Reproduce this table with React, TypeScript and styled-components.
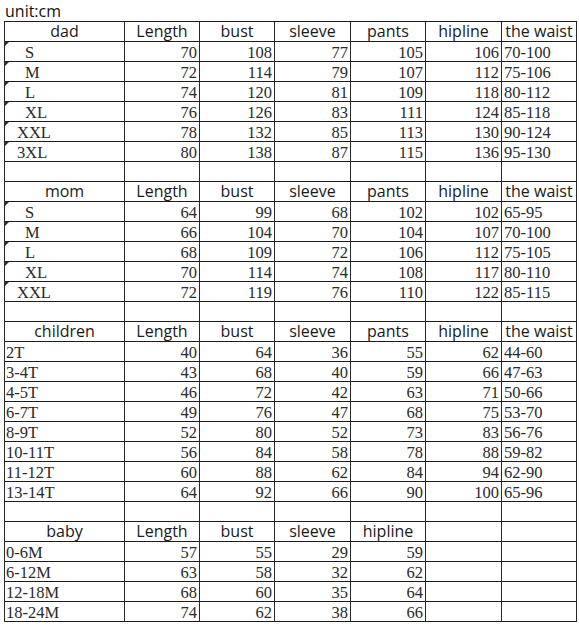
import styled, { createGlobalStyle } from "styled-components";

const GlobalStyle = createGlobalStyle`
  html, body {
    margin: 0;
    padding: 0;
    background: #fff;
  }
`;

const Page = styled.div`
  padding: 0 0 0 4px;
  width: 579px;
  box-sizing: border-box;
`;

const Unit = styled.div`
  height: 21px;
  box-sizing: border-box;
  padding: 1px 0 0 1px;
  font-family: "Open Sans", "Liberation Sans", sans-serif;
  font-size: 16px;
  line-height: 20px;
  color: #111;
`;

const Sheet = styled.div`
  display: grid;
  grid-template-columns: 120px 75px 75px 76px 75px 76px 75px;
  grid-auto-rows: 20px;
  width: 573px;
  border-top: 1px solid #1c1c1c;
  border-left: 1px solid #2a2a2a;
  box-sizing: border-box;
`;

type Kind = "head" | "num" | "label" | "range";

const Cell = styled.div<{ $kind: Kind; $indent?: number; $mark?: boolean }>`
  position: relative;
  box-sizing: border-box;
  border-right: 1px solid #2a2a2a;
  border-bottom: 1px solid #1c1c1c;
  white-space: nowrap;
  color: #1a1a1a;
  display: flex;
  ${(p) =>
    p.$kind === "head"
      ? `
    font-family: "Open Sans", "Liberation Sans", sans-serif;
    font-size: 16px;
    align-items: center;
    justify-content: center;
    line-height: 18px;
    padding-bottom: 1px;
  `
      : `
    font-family: "Liberation Serif", "DejaVu Serif", serif;
    font-size: 16.5px;
    align-items: flex-end;
    line-height: 17px;
    color: #2a2a2a;
  `}
  ${(p) => (p.$kind === "num" ? "justify-content: flex-end; padding-right: 2px;" : "")}
  ${(p) =>
    p.$kind === "label" || p.$kind === "range"
      ? `justify-content: flex-start; padding-left: ${p.$indent ?? 1}px;`
      : ""}

  ${(p) =>
    p.$mark
      ? `
    &::before {
      content: "";
      position: absolute;
      left: 0;
      top: 0;
      border-top: 4px solid #333;
      border-right: 4px solid transparent;
    }
  `
      : ""}
`;

type Row = (string | number)[];

type Section = {
  head: string[];
  rows: Row[];
  marked?: boolean;
  blankAfter?: boolean;
};

const columns = ["Length", "bust", "sleeve", "pants", "hipline", "the waist"];

const sections: Section[] = [
  {
    head: ["dad", ...columns],
    marked: true,
    blankAfter: true,
    rows: [
      ["S", 70, 108, 77, 105, 106, "70-100"],
      ["M", 72, 114, 79, 107, 112, "75-106"],
      ["L", 74, 120, 81, 109, 118, "80-112"],
      ["XL", 76, 126, 83, 111, 124, "85-118"],
      ["XXL", 78, 132, 85, 113, 130, "90-124"],
      ["3XL", 80, 138, 87, 115, 136, "95-130"],
    ],
  },
  {
    head: ["mom", ...columns],
    marked: true,
    blankAfter: true,
    rows: [
      ["S", 64, 99, 68, 102, 102, "65-95"],
      ["M", 66, 104, 70, 104, 107, "70-100"],
      ["L", 68, 109, 72, 106, 112, "75-105"],
      ["XL", 70, 114, 74, 108, 117, "80-110"],
      ["XXL", 72, 119, 76, 110, 122, "85-115"],
    ],
  },
  {
    head: ["children", ...columns],
    blankAfter: true,
    rows: [
      ["2T", 40, 64, 36, 55, 62, "44-60"],
      ["3-4T", 43, 68, 40, 59, 66, "47-63"],
      ["4-5T", 46, 72, 42, 63, 71, "50-66"],
      ["6-7T", 49, 76, 47, 68, 75, "53-70"],
      ["8-9T", 52, 80, 52, 73, 83, "56-76"],
      ["10-11T", 56, 84, 58, 78, 88, "59-82"],
      ["11-12T", 60, 88, 62, 84, 94, "62-90"],
      ["13-14T", 64, 92, 66, 90, 100, "65-96"],
    ],
  },
  {
    head: ["baby", "Length", "bust", "sleeve", "hipline", "", ""],
    rows: [
      ["0-6M", 57, 55, 29, 59, "", ""],
      ["6-12M", 63, 58, 32, 62, "", ""],
      ["12-18M", 68, 60, 35, 64, "", ""],
      ["18-24M", 74, 62, 38, 66, "", ""],
    ],
  },
];

// dad/mom sizes sit indented like in the spreadsheet
const indentFor = (size: string) => (size.length >= 3 ? 12 : 20);

function SizeRow({ row, marked }: { row: Row; marked?: boolean }) {
  return (
    <>
      {row.map((value, i) => {
        if (i === 0) {
          const text = String(value);
          return (
            <Cell
              key={i}
              $kind="label"
              $mark={marked}
              $indent={marked ? indentFor(text) : 1}
            >
              {text}
            </Cell>
          );
        }
        if (i === 6) {
          return (
            <Cell key={i} $kind="range" $indent={2}>
              {value}
            </Cell>
          );
        }
        return (
          <Cell key={i} $kind="num">
            {value}
          </Cell>
        );
      })}
    </>
  );
}

export default function App() {
  return (
    <Page>
      <GlobalStyle />
      <Unit>unit:cm</Unit>
      <Sheet>
        {sections.map((section, s) => (
          <>
            {section.head.map((h, i) => (
              <Cell key={`h${s}-${i}`} $kind="head">
                {h}
              </Cell>
            ))}
            {section.rows.map((row, r) => (
              <SizeRow key={`r${s}-${r}`} row={row} marked={section.marked} />
            ))}
            {section.blankAfter &&
              columns.concat("").map((_, i) => (
                <Cell key={`b${s}-${i}`} $kind="num" />
              ))}
          </>
        ))}
      </Sheet>
    </Page>
  );
}
